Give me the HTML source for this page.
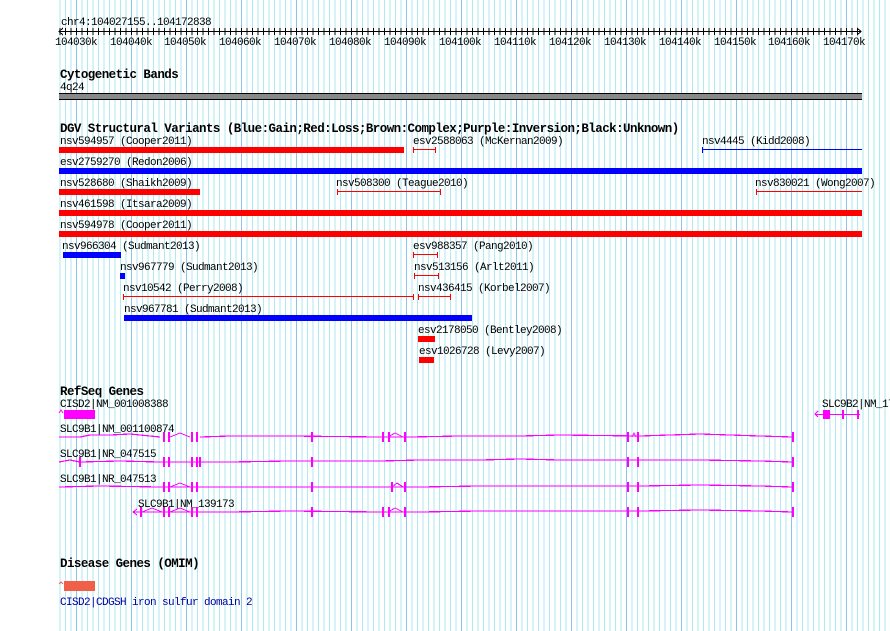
<!DOCTYPE html>
<html><head><meta charset="utf-8"><style>
html,body{margin:0;padding:0;background:#fff;width:890px;height:631px;overflow:hidden}
svg{display:block}
text{font-family:"Liberation Mono","DejaVu Sans Mono",monospace;font-size:11px;letter-spacing:-0.6px;fill:#000}
.b{font-weight:bold;font-size:12.5px;letter-spacing:-0.55px}
</style></head><body>
<svg width="890" height="631" viewBox="0 0 890 631" shape-rendering="crispEdges">
<defs>
<pattern id="g" x="76" y="0" width="55" height="631" patternUnits="userSpaceOnUse">
<rect x="0" y="0" width="1" height="631" fill="#88c4ec"/>
<rect x="5.5" y="0" width="1" height="631" fill="#aeeaf0"/>
<rect x="11" y="0" width="1" height="631" fill="#aeeaf0"/>
<rect x="16.5" y="0" width="1" height="631" fill="#aeeaf0"/>
<rect x="22" y="0" width="1" height="631" fill="#aeeaf0"/>
<rect x="27.5" y="0" width="1" height="631" fill="#aeeaf0"/>
<rect x="33" y="0" width="1" height="631" fill="#aeeaf0"/>
<rect x="38.5" y="0" width="1" height="631" fill="#aeeaf0"/>
<rect x="44" y="0" width="1" height="631" fill="#aeeaf0"/>
<rect x="49.5" y="0" width="1" height="631" fill="#aeeaf0"/>
</pattern>
<pattern id="t" x="76" y="0" width="5.5" height="10" patternUnits="userSpaceOnUse">
<rect x="0" y="0" width="1" height="10" fill="#000"/>
</pattern>
</defs>
<rect x="59" y="0" width="831" height="631" fill="url(#g)"/>

<text x="61" y="25">chr4:104027155..104172838</text>
<rect x="59" y="31" width="802" height="1" fill="#000"/>
<rect x="59" y="28" width="802" height="7" fill="url(#t)"/>
<polyline points="63,28 59,31.5 63,35" fill="none" stroke="#000"/>
<polyline points="857,28 861,31.5 857,35" fill="none" stroke="#000"/>
<g>
<text x="55" y="45">104030k</text><text x="110" y="45">104040k</text><text x="164" y="45">104050k</text><text x="219" y="45">104060k</text><text x="274" y="45">104070k</text><text x="329" y="45">104080k</text><text x="384" y="45">104090k</text><text x="439" y="45">104100k</text><text x="494" y="45">104110k</text><text x="549" y="45">104120k</text><text x="604" y="45">104130k</text><text x="659" y="45">104140k</text><text x="714" y="45">104150k</text><text x="768" y="45">104160k</text><text x="823" y="45">104170k</text>
</g>

<text class="b" x="60" y="78">Cytogenetic Bands</text>
<text x="60" y="90">4q24</text>
<rect x="59" y="93" width="803" height="7" fill="#888"/>
<rect x="59" y="93" width="803" height="1" fill="#000"/>
<rect x="59" y="99" width="803" height="1" fill="#000"/>

<text class="b" x="60" y="132">DGV Structural Variants (Blue:Gain;Red:Loss;Brown:Complex;Purple:Inversion;Black:Unknown)</text>
<text x="60" y="144">nsv594957 (Cooper2011)</text>
<rect x="59" y="147" width="345" height="6" fill="#f00"/>
<text x="413" y="144">esv2588063 (McKernan2009)</text>
<rect x="413" y="149" width="22" height="1" fill="#f00"/><rect x="413" y="147" width="1" height="6" fill="#f00"/><rect x="435" y="147" width="1" height="6" fill="#f00"/>
<text x="702" y="144">nsv4445 (Kidd2008)</text>
<rect x="702" y="149" width="160" height="1" fill="#00f"/><rect x="702" y="147" width="1" height="6" fill="#00f"/>

<text x="60" y="165">esv2759270 (Redon2006)</text>
<rect x="59" y="168" width="803" height="6" fill="#00f"/>

<text x="60" y="186">nsv528680 (Shaikh2009)</text>
<rect x="59" y="189" width="141" height="6" fill="#f00"/>
<text x="336" y="186">nsv508300 (Teague2010)</text>
<rect x="337" y="191" width="104" height="1" fill="#f00"/><rect x="337" y="189" width="1" height="6" fill="#f00"/><rect x="440" y="189" width="1" height="6" fill="#f00"/>
<text x="755" y="186">nsv830021 (Wong2007)</text>
<rect x="756" y="191" width="106" height="1" fill="#f00"/><rect x="756" y="189" width="1" height="6" fill="#f00"/>

<text x="60" y="207">nsv461598 (Itsara2009)</text>
<rect x="59" y="210" width="803" height="6" fill="#f00"/>
<text x="60" y="228">nsv594978 (Cooper2011)</text>
<rect x="59" y="231" width="803" height="6" fill="#f00"/>

<text x="62" y="249">nsv966304 (Sudmant2013)</text>
<rect x="63" y="252" width="58" height="6" fill="#00f"/>
<text x="413" y="249">esv988357 (Pang2010)</text>
<rect x="413" y="254" width="24" height="1" fill="#f00"/><rect x="413" y="252" width="1" height="6" fill="#f00"/><rect x="437" y="252" width="1" height="6" fill="#f00"/>

<text x="120" y="270">nsv967779 (Sudmant2013)</text>
<rect x="120" y="273" width="5" height="6" fill="#00f"/>
<text x="414" y="270">nsv513156 (Arlt2011)</text>
<rect x="414" y="275" width="24" height="1" fill="#f00"/><rect x="414" y="273" width="1" height="6" fill="#f00"/><rect x="438" y="273" width="1" height="6" fill="#f00"/>

<text x="123" y="291">nsv10542 (Perry2008)</text>
<rect x="123" y="296" width="290" height="1" fill="#f00"/><rect x="123" y="294" width="1" height="6" fill="#f00"/><rect x="413" y="294" width="1" height="6" fill="#f00"/>
<text x="418" y="291">nsv436415 (Korbel2007)</text>
<rect x="418" y="296" width="32" height="1" fill="#f00"/><rect x="418" y="294" width="1" height="6" fill="#f00"/><rect x="450" y="294" width="1" height="6" fill="#f00"/>

<text x="124" y="312">nsv967781 (Sudmant2013)</text>
<rect x="124" y="315" width="348" height="6" fill="#00f"/>
<text x="418" y="333">esv2178050 (Bentley2008)</text>
<rect x="418" y="336" width="17" height="6" fill="#f00"/>
<text x="419" y="354">esv1026728 (Levy2007)</text>
<rect x="419" y="357" width="15" height="6" fill="#f00"/>

<text class="b" x="60" y="395">RefSeq Genes</text>
<text x="60" y="407">CISD2|NM_001008388</text>
<polyline points="59,413 61,410 63,413" fill="none" stroke="#f0f" shape-rendering="auto"/>
<rect x="64" y="410" width="31" height="9" fill="#f0f"/>
<text x="822" y="407">SLC9B2|NM_17</text>
<rect x="815" y="414" width="45" height="1" fill="#f0f"/>
<polyline points="818,411 815,414 818,417" fill="none" stroke="#f0f"/>
<rect x="823" y="410" width="7" height="9" fill="#f0f"/>
<rect x="842" y="410" width="2" height="9" fill="#f0f"/><rect x="857" y="410" width="2" height="9" fill="#f0f"/>

<g fill="#f0f">
<text x="60" y="432">SLC9B1|NM_001100874</text>
<polyline points="59,437 80,437 90,435 110,435 130,434 160,437" fill="none" stroke="#f0f" stroke-width="1.2"/>
<polyline points="200,437 230,436 290,436 380,437 410,437 460,436 520,436 560,435 640,436 700,434 760,436 793,437" fill="none" stroke="#f0f" stroke-width="1.2"/>
<polyline points="170,437 180,433 190,437" fill="none" stroke="#f0f"/><polyline points="388,437 395,433 403,437" fill="none" stroke="#f0f"/><polyline points="632,437 634,433 636,437" fill="none" stroke="#f0f"/>
<rect x="163" y="432" width="2" height="10"/><rect x="168" y="432" width="2" height="10"/><rect x="191" y="432" width="2" height="10"/><rect x="196" y="432" width="2" height="10"/><rect x="311" y="432" width="2" height="10"/><rect x="382" y="432" width="2" height="10"/><rect x="388" y="432" width="2" height="10"/><rect x="404" y="432" width="2" height="10"/><rect x="627" y="432" width="2" height="10"/><rect x="637" y="432" width="2" height="10"/><rect x="792" y="432" width="2" height="10"/>

<text x="60" y="457">SLC9B1|NR_047515</text>
<polyline points="59,462 70,460 80,462 120,461 160,462 230,462 290,461 380,461 420,460 480,460 520,459 560,460 620,460 700,460 760,461 793,462" fill="none" stroke="#f0f" stroke-width="1.2"/>
<rect x="79" y="457" width="2" height="10"/><rect x="163" y="457" width="2" height="10"/><rect x="168" y="457" width="2" height="10"/><rect x="191" y="457" width="2" height="10"/><rect x="196" y="457" width="2" height="10"/><rect x="199" y="457" width="2" height="10"/><rect x="311" y="457" width="2" height="10"/><rect x="627" y="457" width="2" height="10"/><rect x="637" y="457" width="2" height="10"/><rect x="792" y="457" width="2" height="10"/>

<text x="60" y="482">SLC9B1|NR_047513</text>
<polyline points="59,487 100,486 160,487 230,487 290,487 380,487 420,487 480,486 560,486 640,486 700,485 760,486 793,487" fill="none" stroke="#f0f" stroke-width="1.2"/>
<polyline points="392,487 397,483 403,487" fill="none" stroke="#f0f"/><polyline points="170,487 180,483 190,487" fill="none" stroke="#f0f"/>
<rect x="163" y="482" width="2" height="10"/><rect x="168" y="482" width="2" height="10"/><rect x="191" y="482" width="2" height="10"/><rect x="196" y="482" width="2" height="10"/><rect x="311" y="482" width="2" height="10"/><rect x="391" y="482" width="2" height="10"/><rect x="404" y="482" width="2" height="10"/><rect x="627" y="482" width="2" height="10"/><rect x="637" y="482" width="2" height="10"/><rect x="792" y="482" width="2" height="10"/>

<text x="138" y="507">SLC9B1|NM_139173</text>
<polyline points="133,512 160,512 230,512 290,511 380,512 420,512 480,511 560,511 640,511 700,510 760,511 793,512" fill="none" stroke="#f0f" stroke-width="1.2"/>
<polyline points="137,509 133,512 137,515" fill="none" stroke="#f0f"/>
<polyline points="142,512 152,508 162,512" fill="none" stroke="#f0f"/><polyline points="170,512 180,508 190,512" fill="none" stroke="#f0f"/><polyline points="388,512 395,508 403,512" fill="none" stroke="#f0f"/>
<rect x="140" y="507" width="2" height="10"/><rect x="163" y="507" width="2" height="10"/><rect x="168" y="507" width="2" height="10"/><rect x="191" y="507" width="2" height="10"/><rect x="196" y="507" width="2" height="10"/><rect x="311" y="507" width="2" height="10"/><rect x="382" y="507" width="2" height="10"/><rect x="388" y="507" width="2" height="10"/><rect x="404" y="507" width="2" height="10"/><rect x="627" y="507" width="2" height="10"/><rect x="637" y="507" width="2" height="10"/><rect x="792" y="507" width="2" height="10"/>
</g>

<text class="b" x="60" y="567">Disease Genes (OMIM)</text>
<polyline points="59,584 61,582 63,584" fill="none" stroke="#f06040" shape-rendering="auto"/>
<rect x="64" y="581" width="31" height="10" fill="#f06048"/>
<text x="60" y="605" style="fill:#0000a0">CISD2|CDGSH iron sulfur domain 2</text>
</svg>
</body></html>
